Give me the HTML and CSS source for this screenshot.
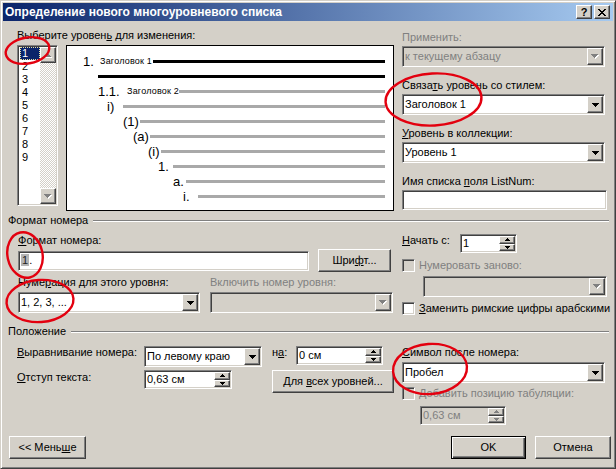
FILE: index.html
```html
<!DOCTYPE html>
<html lang="ru">
<head>
<meta charset="utf-8">
<title>Определение нового многоуровневого списка</title>
<link rel="stylesheet" href="styles.css">
</head>
<body>
<div class="win">
  <div class="titlebar">
    <span class="title">Определение нового многоуровневого списка</span>
    <span class="tb-btn tb-help">?</span>
    <span class="tb-btn tb-close"><svg width="8" height="7" viewBox="0 0 8 7"><path d="M0 0h2v1h1v1h2v-1h1v-1h2v1h-1v1h-1v1h-1v1h1v1h1v1h1v1h-2v-1h-1v-1h-2v1h-1v1h-2v-1h1v-1h1v-1h1v-1h-1v-1h-1v-1h-1z" fill="#000"/></svg></span>
  </div>
  <div class="client">
    <!-- top: level list, preview, style links -->
    <div class="sec sec-top">
      <div class="col-left">
        <div class="lbl">Выберите уровен<u>ь</u> для изменения:</div>
        <div class="lp-row">
          <div class="listbox sunken">
            <div class="items">
              <div class="item sel"><span>1</span></div>
              <div class="item">2</div>
              <div class="item">3</div>
              <div class="item">4</div>
              <div class="item">5</div>
              <div class="item">6</div>
              <div class="item">7</div>
              <div class="item">8</div>
              <div class="item">9</div>
            </div>
            <div class="vscroll">
              <div class="sbtn raised"><svg class="ar dis" width="8" height="5" viewBox="0 0 8 5"><path class="sh" d="M4 1h1v1h1v1h1v1h1v1h-7v-1h1v-1h1v-1h1z"/><path d="M3 0h1v1h1v1h1v1h1v1h-7v-1h1v-1h1v-1h1z"/></svg></div>
              <div class="track"></div>
              <div class="sbtn raised"><svg class="ar dis" width="8" height="5" viewBox="0 0 8 5"><path class="sh" d="M1 1h7v1h-1v1h-1v1h-1v1h-1v-1h-1v-1h-1v-1h-1z"/><path d="M0 0h7v1h-1v1h-1v1h-1v1h-1v-1h-1v-1h-1v-1h-1z"/></svg></div>
            </div>
          </div>
          <div class="preview">
            <div class="pv r1"><span class="num">1.</span><span class="hd">Заголовок 1</span><i class="ln blk"></i></div>
            <div class="pv r2"><i class="ln blk"></i></div>
            <div class="pv r3"><span class="num">1.1.</span><span class="hd">Заголовок 2</span><i class="ln"></i></div>
            <div class="pv r4"><span class="num">i)</span><i class="ln"></i></div>
            <div class="pv r5"><span class="num">(1)</span><i class="ln"></i></div>
            <div class="pv r6"><span class="num">(a)</span><i class="ln"></i></div>
            <div class="pv r7"><span class="num">(i)</span><i class="ln"></i></div>
            <div class="pv r8"><span class="num">1.</span><i class="ln"></i></div>
            <div class="pv r9"><span class="num">a.</span><i class="ln"></i></div>
            <div class="pv r10"><span class="num">i.</span><i class="ln"></i></div>
          </div>
        </div>
      </div>
      <div class="col-right">
        <div class="lbl dis">Применить:</div>
        <div class="combo sunken disabled w203 mt2"><span class="val">к текущему абзацу</span><span class="dd raised"><svg class="ar dis" width="8" height="5" viewBox="0 0 8 5"><path class="sh" d="M1 1h7v1h-1v1h-1v1h-1v1h-1v-1h-1v-1h-1v-1h-1z"/><path d="M0 0h7v1h-1v1h-1v1h-1v1h-1v-1h-1v-1h-1v-1h-1z"/></svg></span></div>
        <div class="lbl mt12">Связа<u>т</u>ь уровень со стилем:</div>
        <div class="combo sunken w203 mt2"><span class="val">Заголовок 1</span><span class="dd raised"><svg class="ar" width="7" height="4" viewBox="0 0 7 4"><path d="M0 0h7v1h-1v1h-1v1h-1v1h-1v-1h-1v-1h-1v-1h-1z"/></svg></span></div>
        <div class="lbl mt12"><u>У</u>ровень в коллекции:</div>
        <div class="combo sunken w203 mt2"><span class="val">Уровень 1</span><span class="dd raised"><svg class="ar" width="7" height="4" viewBox="0 0 7 4"><path d="M0 0h7v1h-1v1h-1v1h-1v1h-1v-1h-1v-1h-1v-1h-1z"/></svg></span></div>
        <div class="lbl mt12">Имя списка <u>п</u>оля ListNum:</div>
        <div class="edit sunken w205 mt2"></div>
      </div>
    </div>

    <div class="grp"><span>Формат номера</span><i class="etch"></i></div>

    <div class="sec sec-fmt">
      <div class="fmt-left">
        <div class="lbl mt7"><u>Ф</u>ормат номера:</div>
        <div class="row fmt-row">
          <div class="edit sunken w291 h19"><span class="val"><span class="fld">1</span>.</span></div>
          <div class="btn raised w73 ml9"><span>Шри<u>ф</u>т...</span></div>
        </div>
        <div class="pair mt4">
          <div class="lbl">Нуме<u>р</u>ация для этого уровня:</div>
          <div class="lbl dis">Включить номер уровня:</div>
        </div>
        <div class="pair mt3">
          <div class="combo sunken"><span class="val">1, 2, 3, ...</span><span class="dd raised"><svg class="ar" width="7" height="4" viewBox="0 0 7 4"><path d="M0 0h7v1h-1v1h-1v1h-1v1h-1v-1h-1v-1h-1v-1h-1z"/></svg></span></div>
          <div class="combo sunken disabled"><span class="val"></span><span class="dd raised"><svg class="ar dis" width="8" height="5" viewBox="0 0 8 5"><path class="sh" d="M1 1h7v1h-1v1h-1v1h-1v1h-1v-1h-1v-1h-1v-1h-1z"/><path d="M0 0h7v1h-1v1h-1v1h-1v1h-1v-1h-1v-1h-1v-1h-1z"/></svg></span></div>
        </div>
      </div>
      <div class="fmt-right">
        <div class="row start-row">
          <div class="lbl w58"><u>Н</u>ачать с:</div>
          <div class="spin sunken w57"><span class="val">1</span><span class="spbtns"><span class="sp raised"><svg class="sa" width="5" height="3" viewBox="0 0 5 3"><path d="M2 0h1v1h1v1h1v1h-5v-1h1v-1h1z"/></svg></span><span class="sp raised"><svg class="sa" width="5" height="3" viewBox="0 0 5 3"><path d="M0 0h5v1h-1v1h-1v1h-1v-1h-1v-1h-1z"/></svg></span></span></div>
        </div>
        <div class="cbrow mt6"><span class="cb dcb"></span><span class="lbl dis">Нумеровать заново:</span></div>
        <div class="combo sunken disabled w184 ml21 mt4"><span class="val"></span><span class="dd raised"><svg class="ar dis" width="8" height="5" viewBox="0 0 8 5"><path class="sh" d="M1 1h7v1h-1v1h-1v1h-1v1h-1v-1h-1v-1h-1v-1h-1z"/><path d="M0 0h7v1h-1v1h-1v1h-1v1h-1v-1h-1v-1h-1v-1h-1z"/></svg></span></div>
        <div class="cbrow mt5"><span class="cb"></span><span class="lbl"><u>З</u>аменить римские цифры арабскими</span></div>
      </div>
    </div>

    <div class="grp"><span>Положение</span><i class="etch"></i></div>

    <div class="sec sec-pos">
      <div class="pos-left">
        <div class="row pos-row1">
          <div class="lbl w127"><u>В</u>ыравнивание номера:</div>
          <div class="combo sunken w118"><span class="val">По левому краю</span><span class="dd raised"><svg class="ar" width="7" height="4" viewBox="0 0 7 4"><path d="M0 0h7v1h-1v1h-1v1h-1v1h-1v-1h-1v-1h-1v-1h-1z"/></svg></span></div>
          <div class="lbl w24 ml10">н<u>а</u>:</div>
          <div class="spin sunken w87"><span class="val">0 см</span><span class="spbtns"><span class="sp raised"><svg class="sa" width="5" height="3" viewBox="0 0 5 3"><path d="M2 0h1v1h1v1h1v1h-5v-1h1v-1h1z"/></svg></span><span class="sp raised"><svg class="sa" width="5" height="3" viewBox="0 0 5 3"><path d="M0 0h5v1h-1v1h-1v1h-1v-1h-1v-1h-1z"/></svg></span></span></div>
        </div>
        <div class="row pos-row2">
          <div class="lbl w127 mt1"><u>О</u>тступ текста:</div>
          <div class="spin sunken w88"><span class="val">0,63 см</span><span class="spbtns"><span class="sp raised"><svg class="sa" width="5" height="3" viewBox="0 0 5 3"><path d="M2 0h1v1h1v1h1v1h-5v-1h1v-1h1z"/></svg></span><span class="sp raised"><svg class="sa" width="5" height="3" viewBox="0 0 5 3"><path d="M0 0h5v1h-1v1h-1v1h-1v-1h-1v-1h-1z"/></svg></span></span></div>
          <div class="btn raised w122 ml40"><span>Для <u>в</u>сех уровней...</span></div>
        </div>
      </div>
      <div class="pos-right">
        <div class="lbl mt8"><u>С</u>имвол после номера:</div>
        <div class="combo sunken w203 mt3"><span class="val">Пробел</span><span class="dd raised"><svg class="ar" width="7" height="4" viewBox="0 0 7 4"><path d="M0 0h7v1h-1v1h-1v1h-1v1h-1v-1h-1v-1h-1v-1h-1z"/></svg></span></div>
        <div class="cbrow mt4"><span class="cb dcb"></span><span class="lbl dis"><u>Д</u>обавить позицию табуляции:</span></div>
        <div class="spin sunken disabled w86 ml18 mt6"><span class="val">0,63 см</span><span class="spbtns"><span class="sp raised"><svg class="sa dis" width="5" height="3" viewBox="0 0 5 3"><path d="M2 0h1v1h1v1h1v1h-5v-1h1v-1h1z"/></svg></span><span class="sp raised"><svg class="sa dis" width="5" height="3" viewBox="0 0 5 3"><path d="M0 0h5v1h-1v1h-1v1h-1v-1h-1v-1h-1z"/></svg></span></span></div>
      </div>
    </div>

    <div class="bottom">
      <div class="btn raised w77"><span>&lt;&lt; Мень<u>ш</u>е</span></div>
      <div class="spacer"></div>
      <div class="btn btn-def w75"><span>OK</span></div>
      <div class="btn raised w76 ml9"><span>Отмена</span></div>
    </div>
  </div>

  <svg class="marks" width="616" height="469" viewBox="0 0 616 469">
    <g fill="none" stroke="#e3000f" stroke-width="2.4">
      <ellipse cx="27.5" cy="50.5" rx="22" ry="13" transform="rotate(-10 27.5 50.5)"/>
      <ellipse cx="433.5" cy="99.5" rx="48" ry="26" transform="rotate(-3 433.5 99.5)"/>
      <ellipse cx="25" cy="255" rx="17.5" ry="23" transform="rotate(-12 25 255)"/>
      <ellipse cx="40" cy="301" rx="33.5" ry="21" transform="rotate(-4 40 301)"/>
      <ellipse cx="430" cy="369" rx="37" ry="25" transform="rotate(-4 430 369)"/>
    </g>
  </svg>
</div>
</body>
</html>
```
FILE: styles.css
```css
* { box-sizing: border-box; }
html, body { margin: 0; padding: 0; background: #D4D0C8; }
body {
  font-family: "Liberation Sans", Arial, sans-serif;
  font-size: 11px;
  line-height: 13px;
  color: #000;
}
u { text-decoration: underline; text-underline-offset: 1px; }

.win {
  position: relative;
  width: 616px;
  height: 469px;
  background: #D4D0C8;
  border: 1px solid;
  border-color: #D4D0C8 #404040 #404040 #D4D0C8;
  box-shadow: inset 1px 1px #fff, inset -1px -1px #808080;
  padding: 2px;
  display: flex;
  flex-direction: column;
  overflow: hidden;
}

/* title bar */
.titlebar {
  height: 18px;
  flex: none;
  display: flex;
  align-items: center;
  padding: 0 3px 0 2px;
  background: linear-gradient(to right, #0A246A, #A6CAF0);
  color: #fff;
}
.title { flex: 1; font-weight: bold; font-size: 12px; white-space: nowrap; }
.tb-btn {
  width: 16px;
  height: 14px;
  display: flex;
  align-items: center;
  justify-content: center;
  background: #D4D0C8;
  border: 1px solid;
  border-color: #fff #404040 #404040 #fff;
  box-shadow: inset -1px -1px #808080;
  color: #000;
  font-weight: bold;
  font-size: 11px;
  line-height: 12px;
}
.tb-close { margin-left: 2px; }

/* generic bevels */
.sunken {
  border: 1px solid;
  border-color: #808080 #fff #fff #808080;
  box-shadow: inset 1px 1px #404040, inset -1px -1px #D4D0C8;
  padding: 1px;
  background: #fff;
}
.raised {
  background: #D4D0C8;
  border: 1px solid;
  border-color: #fff #404040 #404040 #fff;
  box-shadow: inset -1px -1px #808080;
}

.client { flex: 1; display: flex; flex-direction: column; }
.sec { display: flex; }
.row { display: flex; }
.lbl { height: 13px; white-space: nowrap; }
.dis { color: #808080; }

/* spacing helpers */
.mt1 { margin-top: 1px; } .mt2 { margin-top: 2px; } .mt3 { margin-top: 3px; }
.mt4 { margin-top: 4px; } .mt5 { margin-top: 5px; } .mt6 { margin-top: 6px; }
.mt7 { margin-top: 7px; } .mt8 { margin-top: 8px; } .mt12 { margin-top: 12px; }
.ml9 { margin-left: 9px; } .ml10 { margin-left: 10px; } .ml18 { margin-left: 18px; }
.ml21 { margin-left: 21px; } .ml40 { margin-left: 40px; }
.w24 { width: 24px; } .w57 { width: 57px; } .w58 { width: 58px; }
.w73 { width: 73px; } .w75 { width: 75px; } .w76 { width: 76px; } .w77 { width: 77px; }
.w86 { width: 86px; } .w87 { width: 87px; } .w88 { width: 88px; }
.w118 { width: 118px; } .w122 { width: 122px; } .w127 { width: 127px; }
.w184 { width: 184px; } .w203 { width: 203px; } .w205 { width: 205px; } .w291 { width: 291px; }
.h19 { height: 19px; }

/* top section */
.sec-top { padding: 8px 0 0 14px; }
.col-left { width: 377px; }
.col-right { width: 205px; margin-left: 8px; padding-top: 2px; }
.lp-row { display: flex; align-items: flex-start; margin-top: 3px; }

.listbox { width: 41px; height: 161px; display: flex; }
.items { width: 21px; }
.item { height: 13px; line-height: 13px; padding-left: 3px; }
.item.sel { padding-left: 1px; }
.item.sel span {
  display: block;
  height: 13px;
  line-height: 11px;
  background: #0A246A;
  color: #fff;
  border: 1px dotted #E8E0A0;
  padding-left: 1px;
}
.vscroll { width: 16px; display: flex; flex-direction: column; }
.sbtn { width: 16px; height: 16px; flex: none; display: flex; align-items: center; justify-content: center; }
.track {
  flex: 1;
  background: repeating-conic-gradient(#fff 0 25%, #D4D0C8 0 50%) 0 0 / 2px 2px;
}
.ar { display: block; fill: #000; shape-rendering: crispEdges; }
.ar.dis path { fill: #808080; }
.ar.dis path.sh { fill: #fff; }
.sa { display: block; fill: #000; shape-rendering: crispEdges; }
.sa.dis { fill: #808080; }

.preview {
  width: 328px;
  height: 166px;
  margin-left: 8px;
  border: 1px solid #000;
  background: #fff;
  padding: 8px 8px 0 0;
}
.pv { height: 15px; display: flex; align-items: center; white-space: nowrap; }
.pv .num { font-size: 13px; line-height: 15px; flex: none; }
.pv .hd { font-size: 9px; letter-spacing: 0.2px; flex: none; line-height: 15px; }
.pv .ln { flex: 1; height: 3px; background: #A9A9A9; }
.pv .ln.blk { background: #000; }
.r1 { padding-left: 16px; } .r1 .num { width: 17px; } .r1 .hd { width: 53px; }
.r2 { padding-left: 31px; }
.r3 { padding-left: 31px; } .r3 .num { width: 29px; } .r3 .hd { width: 52px; }
.r4 { padding-left: 40px; } .r4 .num { width: 16px; }
.r5 { padding-left: 56px; } .r5 .num { width: 17px; }
.r6 { padding-left: 66px; } .r6 .num { width: 17px; }
.r7 { padding-left: 81px; } .r7 .num { width: 13px; }
.r8 { padding-left: 91px; } .r8 .num { width: 15px; }
.r9 { padding-left: 106px; } .r9 .num { width: 13px; }
.r10 { padding-left: 116px; } .r10 .num { width: 15px; }

/* combo / edit / spin */
.combo { height: 21px; display: flex; align-items: stretch; }
.combo .val { flex: 1; padding-left: 1px; line-height: 17px; white-space: nowrap; overflow: hidden; }
.combo .dd { width: 16px; height: 17px; flex: none; display: flex; align-items: center; justify-content: center; }
.combo.disabled { background: #D4D0C8; }
.combo.disabled .val { color: #808080; }
.edit { height: 20px; }
.edit .val { display: block; padding-left: 1px; line-height: 15px; }
.fld { background: #B4B4B4; color: #222; padding: 0 1px; }
.spin { height: 19px; display: flex; flex: none; }
.spin .val { flex: 1; padding-left: 1px; line-height: 15px; white-space: nowrap; }
.spin.disabled { background: #D4D0C8; }
.spin.disabled .val { color: #808080; }
.spbtns { width: 16px; display: flex; flex-direction: column; }
.sp { flex: 1; display: flex; align-items: center; justify-content: center; }

.btn {
  height: 23px;
  flex: none;
  display: flex;
  align-items: center;
  justify-content: center;
  white-space: nowrap;
}
.btn-def {
  background: #D4D0C8;
  border: 1px solid #000;
  box-shadow: inset 1px 1px #fff, inset -1px -1px #404040, inset -2px -2px #808080;
}

.cbrow { display: flex; align-items: center; height: 13px; }
.cb {
  width: 13px;
  height: 13px;
  flex: none;
  background: #fff;
  border: 1px solid;
  border-color: #808080 #fff #fff #808080;
  box-shadow: inset 1px 1px #404040, inset -1px -1px #D4D0C8;
}
.cb.dcb { background: #D4D0C8; }
.cbrow .lbl { margin-left: 4px; }

/* group headers */
.grp {
  display: flex;
  align-items: center;
  height: 13px;
  margin: 3px 4px 0 5px;
  white-space: nowrap;
}
.grp .etch {
  flex: 1;
  height: 2px;
  margin-left: 5px;
  border-top: 1px solid #808080;
  border-bottom: 1px solid #fff;
}

/* number format section */
.sec-fmt { padding-left: 15px; }
.fmt-left { width: 375px; }
.fmt-row { margin-top: 2px; height: 23px; align-items: center; }
.pair { display: grid; grid-template-columns: 182px 183px; column-gap: 10px; }
.fmt-right { width: 205px; margin-left: 9px; padding-top: 7px; }
.start-row { align-items: flex-start; }

.sec-fmt + .grp { margin-top: 10px; }

/* position section */
.sec-pos { padding-left: 14px; }
.pos-left { width: 377px; }
.pos-row1 { margin-top: 8px; align-items: flex-start; }
.pos-row2 { margin-top: 3px; align-items: flex-start; }
.pos-right { width: 205px; margin-left: 8px; }

.bottom { display: flex; margin-top: 11px; padding: 0 2px 0 6px; }
.spacer { flex: 1; }

.marks { position: absolute; left: -1px; top: -1px; pointer-events: none; }
```
